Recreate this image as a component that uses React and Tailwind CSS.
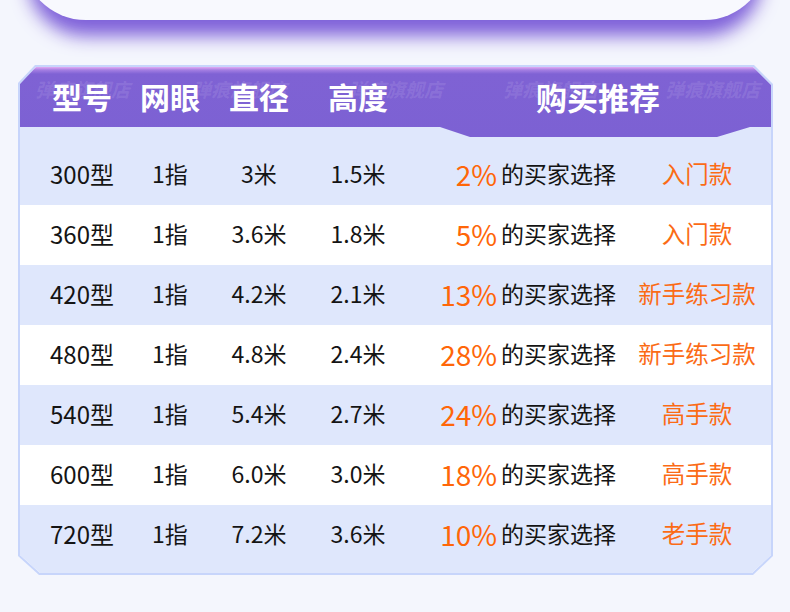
import React from "react";

const rows = [
  ["300型", "1指", "3米", "1.5米", "2%", "入门款"],
  ["360型", "1指", "3.6米", "1.8米", "5%", "入门款"],
  ["420型", "1指", "4.2米", "2.1米", "13%", "新手练习款"],
  ["480型", "1指", "4.8米", "2.4米", "28%", "新手练习款"],
  ["540型", "1指", "5.4米", "2.7米", "24%", "高手款"],
  ["600型", "1指", "6.0米", "3.0米", "18%", "高手款"],
  ["720型", "1指", "7.2米", "3.6米", "10%", "老手款"],
];

const font = { fontFamily: '"Noto Sans CJK SC", "Noto Sans", sans-serif' };

function Row({ r, i }) {
  const blue = i % 2 === 0;
  const first = i === 0;
  const last = i === rows.length - 1;
  const h = first ? "h-[78px] pt-[18px] pb-[3px]" : last ? "h-[68px] pb-[11px]" : "h-[60px] pb-[3px]";
  return (
    <div className={`${h} ${blue ? "bg-[#dfe7fc]" : "bg-white"} flex items-stretch text-[#141414] ${first ? "-mt-[10px]" : ""}`}>
      <div className="w-[124px] shrink-0 flex items-center justify-center text-[24px] leading-none whitespace-nowrap">{r[0]}</div>
      <div className="w-[52px] shrink-0 flex items-center justify-center text-[23px] leading-none whitespace-nowrap">{r[1]}</div>
      <div className="w-[126px] shrink-0 flex items-center justify-center text-[23px] leading-none whitespace-nowrap">{r[2]}</div>
      <div className="w-[72px] shrink-0 flex items-center justify-center text-[23px] leading-none whitespace-nowrap">{r[3]}</div>
      <div className="w-[103px] shrink-0 flex items-center justify-end text-[28px] leading-none text-[#ff6608] whitespace-nowrap">{r[4]}</div>
      <div className="w-[123px] shrink-0 flex items-center justify-start pl-[4px] text-[23px] leading-none whitespace-nowrap">的买家选择</div>
      <div className="w-[154px] shrink-0 flex items-center justify-center text-[23.5px] leading-none text-[#fb6b16] whitespace-nowrap">{r[5]}</div>
    </div>
  );
}

export default function App() {
  const marks = [15, 172, 328, 483, 645];
  return (
    <div className="w-[790px] h-[612px] bg-[#f4f6fd] overflow-hidden" style={font}>
      <div className="mx-[22px] -mt-[60px] h-[80px] rounded-b-[64px] bg-[#f8f9fe] shadow-[0_22px_18px_-6px_rgba(120,88,215,0.95)]" />
      <div className="mt-[45px] ml-[18px] w-[755px] h-[510px] p-[2px] bg-[#c7d5fb] [clip-path:polygon(17px_0,calc(100%_-_19px)_0,100%_19px,100%_calc(100%_-_19px),calc(100%_-_20px)_100%,21px_100%,0_calc(100%_-_19px),0_18px)]">
        <div className="w-full h-full bg-white flex flex-col [clip-path:polygon(16px_0,calc(100%_-_18px)_0,100%_18px,100%_calc(100%_-_18px),calc(100%_-_19px)_100%,20px_100%,0_calc(100%_-_18px),0_17px)]">
          <div className="relative z-10 h-[70px] shrink-0 bg-[linear-gradient(180deg,#e2abf3_0px,#a47ee2_3px,#7f62d4_7px,#7c61d3_100%)] [clip-path:polygon(0_0,100%_0,100%_60px,730px_60px,697px_70px,450px_70px,420px_60px,0_60px)]">
            {marks.map((x) => (
              <span
                key={x}
                className="absolute top-[12px] text-[19px] font-bold italic leading-none text-white/[0.11] whitespace-nowrap"
                style={{ left: x }}
              >
                弹痕旗舰店
              </span>
            ))}
            <div className="relative flex h-[60px] pb-[2px] items-center text-white font-bold text-[30px] leading-none">
              <div className="w-[124px] shrink-0 flex justify-center whitespace-nowrap">型号</div>
              <div className="w-[52px] shrink-0 flex justify-center whitespace-nowrap">网眼</div>
              <div className="w-[126px] shrink-0 flex justify-center whitespace-nowrap">直径</div>
              <div className="w-[72px] shrink-0 flex justify-center whitespace-nowrap">高度</div>
              <div className="w-[408px] shrink-0 flex justify-center whitespace-nowrap text-[31px]">购买推荐</div>
            </div>
          </div>
          {rows.map((r, i) => (
            <Row key={i} r={r} i={i} />
          ))}
        </div>
      </div>
    </div>
  );
}
